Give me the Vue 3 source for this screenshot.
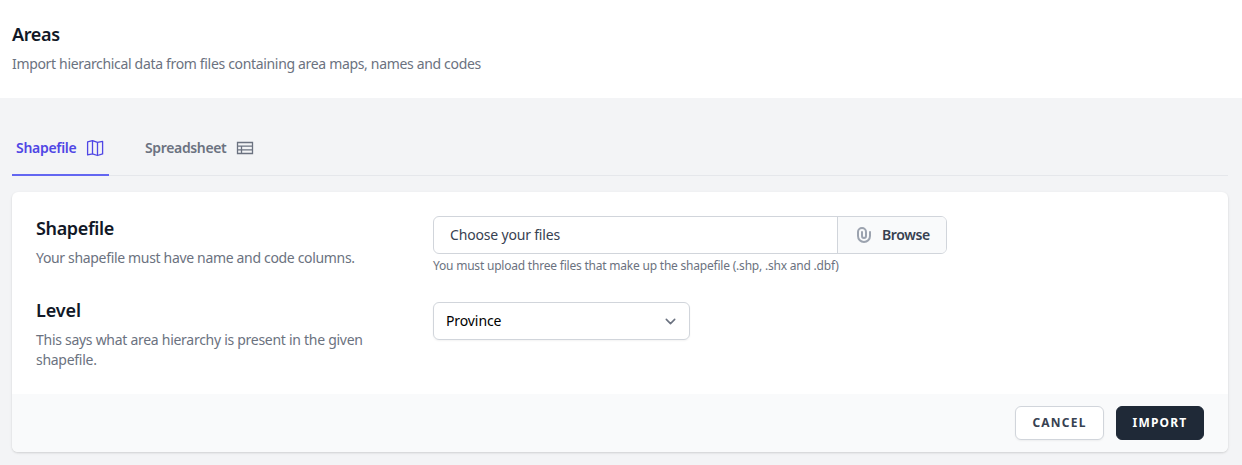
<script setup>
import { ref } from 'vue'

const activeTab = ref('shapefile')
const level = ref('Province')
</script>

<template>
  <div class="page">
    <header class="page-header">
      <h1 class="title areas">Areas</h1>
      <p class="text intro">Import hierarchical data from files containing area maps, names and codes</p>
    </header>

    <main class="content">
      <nav class="tabs">
        <a class="tab" :class="{ active: activeTab === 'shapefile' }" @click="activeTab = 'shapefile'">
          <span class="tab-shape">Shapefile</span>
          <svg class="tab-icon" width="18" height="18" viewBox="-1 -1 18 18" fill="none" stroke="currentColor" stroke-width="1.3" stroke-linejoin="round">
            <path d="M.6 1.9 5.5.7l5 1.7L15.6 1.4v12.5l-5.1 1.6-5-1.7-4.9 1zM5.5.7v13.1M10.5 2.4v13.1" />
          </svg>
        </a>
        <a class="tab" :class="{ active: activeTab === 'spreadsheet' }" @click="activeTab = 'spreadsheet'">
          <span class="tab-sheet">Spreadsheet</span>
          <svg class="tab-icon" width="18" height="18" viewBox="0 0 18 18" fill="none" stroke="currentColor" stroke-width="1.3">
            <path d="M1.5 3.5h15v11h-15zM1.5 7.1h15M1.5 10.8h15M5.5 7v7.5" />
          </svg>
        </a>
      </nav>

      <section class="card">
        <div class="card-body">
          <div class="row first">
            <div class="description">
              <h2 class="title shape-title">Shapefile</h2>
              <p class="text shape-text">Your shapefile must have name and code columns.</p>
            </div>
            <div class="control">
              <div class="file-input">
                <span class="file-name">Choose your files</span>
                <button class="browse" type="button">
                  <svg width="20" height="20" viewBox="0 0 20 20" fill="currentColor">
                    <path fill-rule="evenodd" d="M8 4a3 3 0 00-3 3v4a5 5 0 0010 0V7a1 1 0 112 0v4a7 7 0 11-14 0V7a5 5 0 0110 0v4a3 3 0 11-6 0V7a1 1 0 012 0v4a1 1 0 102 0V7a3 3 0 00-3-3z" clip-rule="evenodd" />
                  </svg>
                  <span>Browse</span>
                </button>
              </div>
              <p class="hint">You must upload three files that make up the shapefile (.shp, .shx and .dbf)</p>
            </div>
          </div>

          <div class="row second">
            <div class="description">
              <h2 class="title level-title">Level</h2>
              <p class="text level-text">This says what area hierarchy is present in the given<br />shapefile.</p>
            </div>
            <div class="control">
              <div class="select">
                <span>{{ level }}</span>
                <svg width="21" height="21" viewBox="0 0 20 20" fill="none" stroke="#6b7280" stroke-width="1.5" stroke-linecap="round" stroke-linejoin="round">
                  <path d="M6 8l4 4 4-4" />
                </svg>
              </div>
            </div>
          </div>
        </div>

        <footer class="card-footer">
          <button class="btn cancel" type="button">CANCEL</button>
          <button class="btn import" type="button">IMPORT</button>
        </footer>
      </section>
    </main>
  </div>
</template>

<style>
body {
  margin: 0;
  background: #f3f4f6;
}
</style>

<style scoped>
.page {
  box-sizing: border-box;
  height: 465px;
  overflow: hidden;
  background: #f3f4f6;
  font-family: "Noto Sans", "Open Sans", sans-serif;
  font-size: 14px;
  line-height: 20px;
}
.page * {
  box-sizing: border-box;
}
.page-header {
  height: 98px;
  padding: 22px 12px 0;
  background: #fff;
}
h1, h2, p {
  margin: 0;
}
.title {
  color: #111827;
  font-size: 18px;
  font-weight: 600;
  line-height: 24px;
  letter-spacing: -0.35px;
  white-space: nowrap;
}
.level-title {
  letter-spacing: -0.1px;
}
.text {
  margin-top: 8px;
  color: #6b7280;
  letter-spacing: -0.33px;
  white-space: nowrap;
}
.level-text {
  letter-spacing: -0.28px;
}
.content {
  padding: 24px 14px 0 12px;
}
.tabs {
  display: flex;
  gap: 32px;
  height: 54px;
  border-bottom: 1px solid #e5e7eb;
}
.tab {
  display: flex;
  height: 54px;
  padding: 16px 5px 0 4px;
  gap: 9px;
  border-bottom: 2px solid transparent;
  color: #6b7280;
  font-weight: 600;
  cursor: pointer;
}
.tab.active {
  border-bottom-color: #6366f1;
  color: #4f46e5;
}
.tab-icon {
  flex: none;
  margin-top: 1px;
}
.tab-shape {
  width: 61px;
  letter-spacing: -0.3px;
}
.tab-sheet {
  width: 82px;
  letter-spacing: -0.35px;
}
.card {
  margin-top: 16px;
  overflow: hidden;
  border-radius: 6px;
  background: #fff;
  box-shadow: 0 1px 3px rgba(0, 0, 0, 0.1), 0 1px 2px rgba(0, 0, 0, 0.06);
}
.card-body {
  height: 202px;
  padding: 24px;
}
.row {
  display: grid;
  grid-template-columns: 373px 1fr;
  column-gap: 24px;
}
.row.first {
  height: 86px;
}
.row.second .description {
  margin-top: -4px;
}
.file-input {
  display: flex;
  width: 514px;
  height: 38px;
  overflow: hidden;
  border: 1px solid #d1d5db;
  border-radius: 6px;
}
.file-name {
  flex: 1;
  padding: 8px 16px;
  color: #374151;
  letter-spacing: -0.18px;
  white-space: nowrap;
}
.browse {
  display: flex;
  align-items: center;
  width: 109px;
  padding: 0 0 0 16px;
  gap: 8px;
  border: 0;
  border-left: 1px solid #d1d5db;
  background: #f9fafb;
  color: #374151;
  font: inherit;
  font-weight: 600;
  letter-spacing: -0.4px;
}
.browse svg {
  color: #9ca3af;
}
.hint {
  margin-top: 4px;
  color: #6b7280;
  font-size: 12px;
  line-height: 16px;
  letter-spacing: -0.21px;
  white-space: nowrap;
}
.select {
  display: flex;
  align-items: center;
  justify-content: space-between;
  width: 257px;
  height: 38px;
  padding: 0 8px 0 12px;
  border: 1px solid #d1d5db;
  border-radius: 6px;
  box-shadow: 0 1px 2px rgba(0, 0, 0, 0.05);
  color: #000;
  letter-spacing: -0.1px;
}
.card-footer {
  display: flex;
  justify-content: flex-end;
  height: 58px;
  padding: 12px 24px;
  gap: 12px;
  background: #f9fafb;
}
.btn {
  height: 34px;
  padding: 0;
  border: 1px solid #d1d5db;
  border-radius: 6px;
  background: #fff;
  color: #374151;
  font-family: inherit;
  font-size: 12px;
  font-weight: 700;
  line-height: 16px;
  letter-spacing: 1.2px;
}
.cancel {
  width: 89px;
  box-shadow: 0 1px 2px rgba(0, 0, 0, 0.05);
}
.import {
  width: 88px;
  border-color: #1f2937;
  background: #1f2937;
  color: #fff;
}
</style>
